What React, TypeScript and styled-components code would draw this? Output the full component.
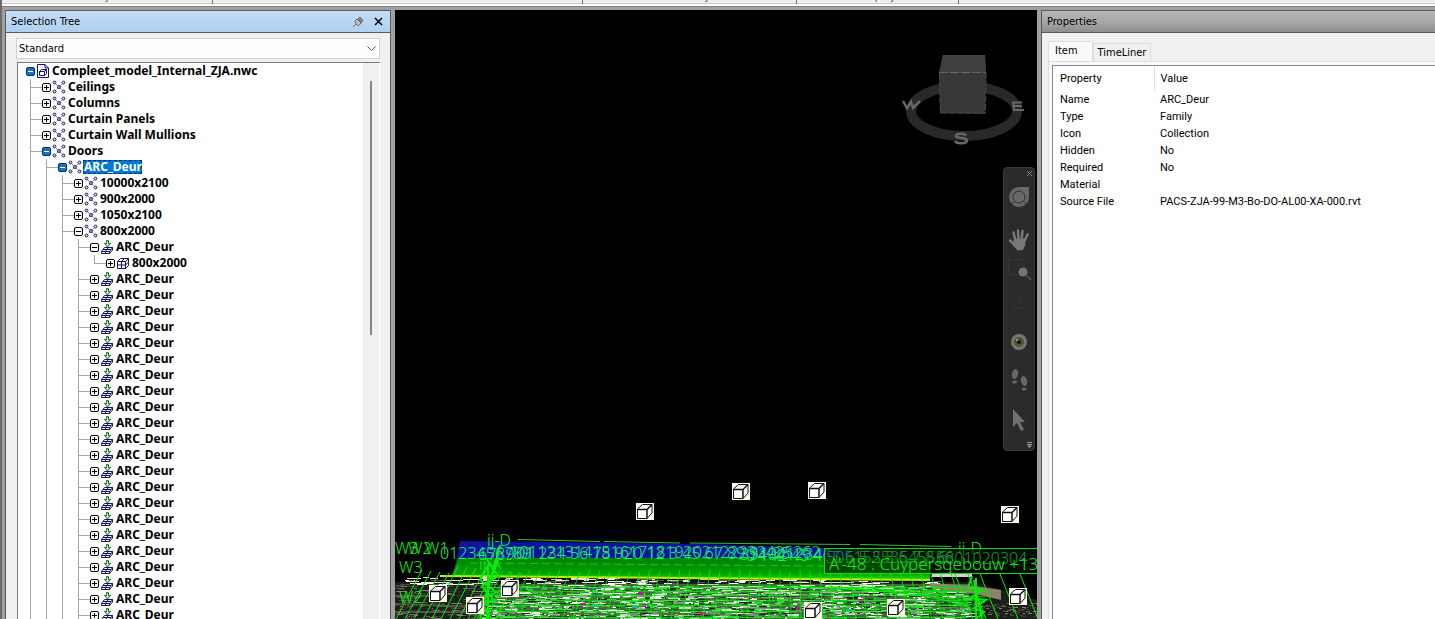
import React from "react";
import styled, { createGlobalStyle } from "styled-components";

const GlobalStyle = createGlobalStyle`
  *, *::before, *::after { box-sizing: border-box; }
  body {
    margin: 0;
    background: #a0a0a0;
    color: #000;
    font: 11px/16px "DejaVu Sans Condensed", Tahoma, sans-serif;
  }
  button, select { font: inherit; color: inherit; }
`;

/* ---------- window frame ---------- */

const Window = styled.div`
  display: flex;
  flex-direction: column;
  height: 100vh;
  overflow: hidden;
  border-left: 2px solid #6a6a6a;
`;

const Ribbon = styled.header`
  display: flex;
  flex: none;
  height: 6px;
  margin-bottom: 4px;
  background: #f0f0f0;
  border-bottom: 2px solid #fff;
  box-shadow: inset 0 -1px #c8c8c8, 0 1px #858585;
`;

const RibbonGroup = styled.div<{ $width?: number }>`
  display: flex;
  flex: ${(p) => (p.$width ? `0 0 ${p.$width}px` : "1")};
  align-items: flex-end;
  justify-content: center;
  overflow: hidden;
  line-height: 14px;
  color: #444;
  border-right: ${(p) => (p.$width ? "1px solid #777" : "none")};
`;

const Workspace = styled.div`
  display: grid;
  grid-template-columns: 386px minmax(0, 1fr) 394px;
  gap: 4px;
  flex: 1;
  min-height: 0;
  padding-left: 3px;
`;

/* ---------- dock panels ---------- */

const Panel = styled.section<{ $open?: boolean }>`
  display: flex;
  flex-direction: column;
  min-height: 0;
  background: #f0f0f0;
  border: 1px solid #5c5c5c;
  border-width: 1px ${(p) => (p.$open ? 0 : 1)}px 0 1px;
`;

const PanelHeader = styled.div<{ $active?: boolean }>`
  display: flex;
  flex: none;
  align-items: center;
  height: 22px;
  padding: 0 6px 0 5px;
  background: ${(p) =>
    p.$active
      ? "linear-gradient(#c3dcf5, #b0d0f0)"
      : "linear-gradient(#b6b6b6, #a8a8a8 50%, #8e8e8e)"};
  border-bottom: 1px solid #5c5c5c;
`;

const PanelTitle = styled.h2`
  flex: 1;
  margin: 0;
  padding-top: 1px;
  font-size: 11px;
  font-weight: 400;
`;

const HeaderButton = styled.button`
  display: flex;
  align-items: center;
  justify-content: center;
  width: 12px;
  height: 16px;
  margin-left: 8px;
  padding: 0;
  background: none;
  border: 0;
`;

const SelectionBody = styled.div`
  display: flex;
  flex-direction: column;
  flex: 1;
  min-height: 0;
  padding: 5px 10px 0 10px;
`;

const Combo = styled.label`
  display: grid;
  flex: none;
  align-items: center;
  height: 21px;
  margin-bottom: 3px;
  background: #fdfdfd;
  border: 1px solid #d2d2d2;

  > * { grid-area: 1 / 1; }
  > svg { justify-self: end; margin-right: 3px; pointer-events: none; }
`;

const ComboSelect = styled.select`
  width: 100%;
  height: 19px;
  padding: 0 2px;
  appearance: none;
  background: none;
  border: 0;
`;

/* ---------- tree ---------- */

const TreeFrame = styled.div`
  display: flex;
  flex: 1;
  min-height: 0;
  margin-left: 1px;
  overflow: hidden;
  background: #fff;
  border: solid #7c7c7c;
  border-width: 1px 0 0 1px;
`;

const TreeList = styled.ul`
  flex: 1;
  margin: 0;
  padding: 0 0 0 4px;
  list-style: none;
  font: 700 12px/16px "Noto Sans", Tahoma, sans-serif;
`;

const TreeRow = styled.li`
  display: flex;
  align-items: center;
  height: 16px;
`;

const Guide = styled.span<{ $branch?: boolean; $end?: boolean }>`
  flex: none;
  width: ${(p) => (p.$branch ? 20 : 16)}px;
  height: 16px;
  background-image: linear-gradient(#a8a8a8, #a8a8a8), linear-gradient(#a8a8a8, #a8a8a8);
  background-repeat: no-repeat;
  background-position: 8px 0, 8px 8px;
  background-size: 1px ${(p) => (p.$end ? 8 : 16)}px, ${(p) => (p.$branch ? 12 : 0)}px 1px;
`;

const Toggle = styled.button<{ $selected?: boolean; $root?: boolean }>`
  display: flex;
  flex: none;
  width: 9px;
  height: 9px;
  margin: 0 1px 0 ${(p) => (p.$root ? 4 : 0)}px;
  padding: 0;
  color: ${(p) => (p.$selected ? "#fff" : "#000")};
  background: ${(p) => (p.$selected ? "#1474c4" : "#fff")};
  border: 1px solid ${(p) => (p.$selected ? "#0a2c66" : "#000")};
  border-radius: 2px;
`;

const NodeLabel = styled.span<{ $selected?: boolean }>`
  margin-left: 1px;
  padding: 0 0 0 1px;
  line-height: 14px;
  white-space: nowrap;
  color: ${(p) => (p.$selected ? "#fff" : "#000")};
  background: ${(p) => (p.$selected ? "#0078d7" : "none")};
  outline: ${(p) => (p.$selected ? "1px dashed #06305c" : "none")};
  outline-offset: -1px;
`;

const ScrollTrack = styled.div`
  flex: none;
  width: 17px;
  padding: 18px 0 0 7px;
  background: #f0f0f0;
  border-right: 1px solid #fff;
`;

const ScrollThumb = styled.div`
  width: 2px;
  height: 254px;
  background: #858585;
`;

type Kind = "file" | "collection" | "insert" | "geometry";
type Node = {
  label: string;
  level: number;
  kind: Kind;
  open?: boolean;
  marked?: boolean;
  selected?: boolean;
  last?: boolean;
};

const nodes: Node[] = [
  { label: "Compleet_model_Internal_ZJA.nwc", level: 0, kind: "file", open: true, marked: true },
  { label: "Ceilings", level: 1, kind: "collection" },
  { label: "Columns", level: 1, kind: "collection" },
  { label: "Curtain Panels", level: 1, kind: "collection" },
  { label: "Curtain Wall Mullions", level: 1, kind: "collection" },
  { label: "Doors", level: 1, kind: "collection", open: true, marked: true },
  { label: "ARC_Deur", level: 2, kind: "collection", open: true, marked: true, selected: true },
  { label: "10000x2100", level: 3, kind: "collection" },
  { label: "900x2000", level: 3, kind: "collection" },
  { label: "1050x2100", level: 3, kind: "collection" },
  { label: "800x2000", level: 3, kind: "collection", open: true },
  { label: "ARC_Deur", level: 4, kind: "insert", open: true },
  { label: "800x2000", level: 5, kind: "geometry", last: true },
  ...Array.from({ length: 22 }, (): Node => ({ label: "ARC_Deur", level: 4, kind: "insert" })),
];

function NodeIcon({ kind }: { kind: Kind }) {
  const ink = "#12126e";
  if (kind === "file")
    return (
      <svg width="14" height="16" viewBox="0 0 14 16" fill="#fff" stroke={ink}>
        <path d="M1.500 1.500H9L12.500 5V14.500H1.500Z" />
        <path d="M9 1.500V5H12.500" fill="none" />
        <path d="M3.500 8.500H8.500V12.500H3.500ZM3.500 8.500L5.500 6.500H10.500L8.500 8.500M10.500 6.500V10.500L8.500 12.500" />
      </svg>
    );
  if (kind === "collection")
    return (
      <svg width="14" height="14" viewBox="0 0 14 14" fill="#e4e4fa" stroke={ink}>
        <path d="M4 4L10 10M10 4L4 10" strokeDasharray="1 1" strokeWidth="0.800" />
        <circle cx="2.500" cy="2.500" r="1.400" />
        <circle cx="11.500" cy="2.500" r="1.400" />
        <circle cx="7" cy="7" r="1.400" />
        <circle cx="2.500" cy="11.500" r="1.400" />
        <circle cx="11.500" cy="11.500" r="1.400" />
      </svg>
    );
  if (kind === "insert")
    return (
      <svg width="14" height="14" viewBox="0 0 14 14" fill="#fff" stroke={ink}>
        <path d="M1.500 11.500L4.500 7.500H12.500L9.500 11.500ZM1.500 11.500V13.500H9.500V11.500M9.500 13.500L12.500 10V7.500" />
        <path d="M3 9.500H11M8.500 7.500L5.500 11.500V13.500" fill="none" />
        <path d="M6.500 0.500H8.500V3.500H10.500L7.500 7L4.500 3.500H6.500Z" fill="#b9e4b9" stroke="#1c7a2c" />
      </svg>
    );
  return (
    <svg width="14" height="14" viewBox="0 0 14 14" fill="#fff" stroke={ink}>
      <path d="M1.500 5.500L4.500 2.500H12.500V9.500L9.500 12.500H1.500Z" />
      <path d="M1.500 5.500H9.500V12.500M9.500 5.500L12.500 2.500M5.500 12.500V5.500L8.500 2.500M1.500 9H9.500L12.500 6" />
    </svg>
  );
}

function TreeItem({ node }: { node: Node }) {
  return (
    <TreeRow>
      {Array.from({ length: node.level }, (_, i) => (
        <Guide key={i} $branch={i === node.level - 1} $end={node.last && i === node.level - 1} />
      ))}
      <Toggle $selected={node.marked} $root={node.level === 0} aria-label={node.open ? "Collapse" : "Expand"}>
        <svg width="7" height="7" viewBox="0 0 7 7" stroke="currentColor">
          <path d={node.open ? "M1 3.500H6" : "M1 3.500H6M3.500 1V6"} />
        </svg>
      </Toggle>
      <NodeIcon kind={node.kind} />
      <NodeLabel $selected={node.selected}>{node.label}</NodeLabel>
    </TreeRow>
  );
}

/* ---------- 3D viewport ---------- */

const Viewport = styled.main`
  position: relative;
  overflow: hidden;
  background: #000;
`;

const SceneCanvas = styled.svg`
  display: block;
  width: 100%;
  height: 100%;
  font-family: "Noto Sans", sans-serif;
  font-weight: 300;
`;

const ViewCube = styled.svg`
  position: absolute;
  top: 40px;
  right: 12px;
`;

const NavBar = styled.nav`
  position: absolute;
  top: 157px;
  right: 2px;
  display: flex;
  flex-direction: column;
  align-items: center;
  width: 32px;
  height: 284px;
  background: #2b2b2b;
  border: 1px solid #3b3b3b;
  border-radius: 4px;
`;

const NavButton = styled.button<{ $height: number }>`
  display: flex;
  flex: none;
  align-items: center;
  justify-content: center;
  width: 30px;
  height: ${(p) => p.$height}px;
  padding: 0;
  background: none;
  border: 0;
`;

const NavSmall = styled(NavButton)`
  align-self: flex-end;
  width: 10px;
`;

function makeRandom(seed: number) {
  let s = seed;
  return () => {
    s = (s * 1103515245 + 12345) % 2147483648;
    return s / 2147483648;
  };
}

type Speck = { x: number; y: number; w: number; h: number; c: string };

function buildRubble() {
  const rnd = makeRandom(11);
  const pick = (list: string[]) => list[Math.floor(rnd() * list.length)];
  const city = ["#e8f4e4", "#c4dcc0", "#9fb79c", "#3f6a3c", "#202820", "#5f9a58", "#d8d8d8", "#18b018", "#1c4a1c", "#7f8f80", "#34d834", "#2c8c2c", "#f4fff0"];
  const road = ["#4a4642", "#2a2826", "#6a6460", "#3a3430", "#1a1a1a", "#5a4038", "#807c78"];
  const out: Speck[] = [];
  for (let i = 0; i < 2200; i++) {
    const y = 586 + Math.floor(rnd() * 33);
    const left = 500 - Math.floor((y - 586) * 0.8);
    const x = left + Math.floor(rnd() * (968 - left));
    out.push({ x, y, w: 2 + Math.floor(rnd() * 12), h: rnd() > 0.8 ? 2 : 1, c: pick(city) });
  }
  for (let i = 0; i < 260; i++) {
    const x = 395 + Math.floor(rnd() * 95);
    out.push({ x, y: 584 + Math.floor(rnd() * 35), w: 2 + Math.floor(rnd() * 10), h: 1, c: pick(road) });
  }
  for (let i = 0; i < 150; i++) {
    const x = 980 + Math.floor(rnd() * 57);
    out.push({ x, y: 603 + Math.floor(rnd() * 14), w: 1 + Math.floor(rnd() * 4), h: 1, c: pick(road) });
  }
  for (let i = 0; i < 190; i++) {
    const x = 395 + Math.floor(rnd() * 540);
    const y = 577 + Math.floor((x - 395) / 110) + Math.floor(rnd() * 8);
    out.push({ x, y, w: 5 + Math.floor(rnd() * 12), h: 1, c: pick(["#fff", "#f4f4ec", "#fff", "#c8c8c0", "#5a5a50", "#e0ecd8"]) });
  }
  return out;
}

const rubble = buildRubble();

const patches = [
  [638, 592, "#c010a0"], [580, 603, "#c010a0"], [640, 604, "#b0109a"], [632, 605, "#20b890"],
  [592, 604, "#20b890"], [796, 607, "#c010a0"], [846, 609, "#20b8a0"], [858, 599, "#b01090"],
  [592, 590, "#30c8a8"], [700, 612, "#c010a0"],
] as const;

const markers = [
  [636, 503], [732, 483], [808, 482], [1001, 506], [429, 585], [501, 580], [466, 597],
  [804, 602], [887, 599], [1009, 588],
];

function Marker({ x, y }: { x: number; y: number }) {
  return (
    <g transform={`translate(${x} ${y})`}>
      <rect width="18" height="17" fill="#fbfbe6" />
      <path d="M1.500 6L6.500 1.500H16V10L11 15.500H1.500Z" fill="#fff" stroke="#111" />
      <path d="M1.500 6.500H11V15.500M11 6.500L16 1.500" fill="none" stroke="#111" strokeWidth="1.500" />
    </g>
  );
}

function Scene() {
  const steep = Array.from({ length: 12 }, (_, i) => 404 + i * 9);
  const columns = Array.from({ length: 46 }, (_, i) => 500 + i * 10);
  return (
    <SceneCanvas viewBox="395 10 642 609" preserveAspectRatio="xMidYMax slice" aria-label="Model view">
      <defs>
        <linearGradient id="lawn" x1="0" y1="0" x2="0" y2="1">
          <stop offset="0" stopColor="#008400" />
          <stop offset="0.700" stopColor="#00a000" />
          <stop offset="1" stopColor="#20e010" />
        </linearGradient>
      </defs>
      <path d="M460 541L700 544L850 549V562H456Z" fill="#0c14a0" />
      <path d="M850 549L930 552V562H850Z" fill="#04240c" />
      <path d="M395 582H975L1037 600V619H395Z" fill="#1b1f1a" />
      <path d="M500 584H968L972 619H474Z" fill="#3c6a38" />
      <g shapeRendering="crispEdges">
        {rubble.map((r, i) => (
          <rect key={i} x={r.x} y={r.y} width={r.w} height={r.h} fill={r.c} />
        ))}
        {patches.map(([x, y, c]) => (
          <rect key={`${x}-${y}`} x={x} y={y} width="6" height="3" fill={c} />
        ))}
      </g>
      <path d="M458 558H930V580H850L452 576Z" fill="url(#lawn)" />
      <path d="M440 575L930 579V581L440 577Z" fill="#b8f010" />
      <path d="M932 574H972V577H932Z" fill="#d0d4cc" />
      <path d="M930 583L975 586L1001 590V600L975 594L930 588Z" fill="#8c8468" />
      <path d="M395 596H440M395 604L480 607M395 612H470" stroke="#55504c" strokeWidth="2" />

      <g stroke="#00f000" fill="none">
        {steep.map((x) => (
          <path key={x} d={`M${x + 18} ${566 + (x % 8)}L${x - 8} 619`} />
        ))}
        {columns.map((x, i) => (
          <path key={x} d={`M${x} ${570 + (i % 3)}L${x + Math.round((x - 740) * 0.09) - 4} 619`} opacity="0.850" />
        ))}
        {[587, 591, 595, 600, 605, 611, 617].map((y) => (
          <path key={y} d={`M480 ${y}.500H968`} opacity="0.750" />
        ))}
        {[0, 1, 2, 3, 4, 5].map((i) => (
          <path key={i} d={`M${760 + i * 34} 586L985 ${592 + i * 5}`} opacity="0.800" />
        ))}
        {[955, 968, 980, 1000, 1020].map((x) => (
          <path key={x} d={`M${x} 574L${x + 18} 619`} />
        ))}
        <path d="M518 539.500L600 541.500M604 541.500L680 543M690 543L850 544.500M860 544.500L951 546.500" stroke="#30c030" />
        <path d="M470 563L930 567" stroke="#20c020" strokeDasharray="8 4" />
        <path d="M500 545L480 619M498 560L484 600M486 558L498 576L482 586L494 600L480 606L492 619M490 562L480 580L496 592L478 602L490 612M488 566V619" strokeWidth="2" />
        <path d="M972 576L968 588L982 590L970 598L986 600L974 608L984 612L976 619M976 578V619M974 580L982 619" strokeWidth="2" />
      </g>

      <g fill="#14f014" fontSize="16">
        <text x="395" y="554">W3</text>
        <text x="408" y="554">W2</text>
        <text x="425" y="554">W1</text>
        <text x="399" y="573">W3</text>
        <text x="399" y="603">W2</text>
        <text x="487" y="546">ij-D</text>
        <text x="479" y="570">ij-A</text>
        <text x="958" y="554">ij-D</text>
      </g>
      <g fill="#18f060" fontSize="16">
        <text x="440" y="559">0123456789</text>
        <text x="478" y="560">6789</text>
        <text x="510" y="558">1011213141516171819202122232425262</text>
        <text x="516" y="559">01 234 56 78 920 12 3 45 67 89 31 35</text>
        <text x="740" y="560">394041234</text>
        <text x="746" y="561">0 142 45 46</text>
      </g>
      <rect x="824.500" y="548.500" width="220" height="25" fill="#001400" fillOpacity="0.620" stroke="#10e010" />
      <g fill="#18982c" fontSize="16">
        <text x="826" y="563">50515253545556</text>
        <text x="832" y="563">5 6 5 5 8 6 7 8 6</text>
        <text x="936" y="564">6801020304</text>
      </g>
      <text x="829" y="570" fontSize="17" fill="#14f014">A'-48 : Cuypersgebouw +135</text>
      {markers.map(([x, y]) => (
        <Marker key={`${x}-${y}`} x={x} y={y} />
      ))}
    </SceneCanvas>
  );
}

function Cube() {
  return (
    <ViewCube width="124" height="98" viewBox="901 50 124 98" aria-label="View cube">
      <ellipse cx="964" cy="111" rx="53" ry="25" fill="none" stroke="#292929" strokeWidth="10" />
      <path d="M943 55H985L986 73L985 114L940 113L939 73Z" fill="#383838" />
      <path d="M943 55H985L986 73H939Z" fill="#404040" />
      <path d="M939 72.500H986" stroke="#686868" strokeDasharray="9 2" />
      <path d="M943 55.500H985M939.500 73L940.500 113H985.500L986 73" fill="none" stroke="#484848" strokeDasharray="6 2" />
      <g fill="none" stroke="#686868" strokeWidth="2.500">
        <path d="M903 101L907 108L911 102L913 108L920 101" />
        <path d="M1022 102.500H1013L1014 110H1024M1013 106H1022" strokeWidth="2" />
        <path d="M966 135.500C965 133 956 133 956 136C956 139 967 137 967 140.500C967 144 956 144 955 141" />
      </g>
    </ViewCube>
  );
}

function Navigation() {
  return (
    <NavBar aria-label="Navigation">
      <NavSmall $height={10} aria-label="Close navigation bar">
        <svg width="5" height="5" viewBox="0 0 5 5" stroke="#8a8a8a"><path d="M0 0L5 5M5 0L0 5" /></svg>
      </NavSmall>
      <NavButton $height={38} aria-label="Steering wheel">
        <svg width="22" height="22" viewBox="0 0 22 22">
          <path d="M11 1H21V11A10 10 0 1 1 11 1Z" fill="#686868" />
          <g fill="none" stroke="#303030"><circle cx="11" cy="11" r="6" /><path d="M6.500 15.500L4 18M15.500 15.500L18 18" /></g>
        </svg>
      </NavButton>
      <NavButton $height={40} aria-label="Pan">
        <svg width="22" height="32" viewBox="0 -8 22 32" fill="none" stroke="#787878" strokeLinecap="round" strokeWidth="2.500">
          <path d="M7.500 13L5.500 4.500M10.500 12L10 2.500M13.500 12L14.500 3M16 14L19.500 6.500M8 18L2 12.500" />
          <path d="M7 12H16V17L14 21H10L6 17Z" fill="#787878" />
        </svg>
      </NavButton>
      <NavButton $height={26} aria-label="Zoom window">
        <svg width="26" height="26" viewBox="0 0 26 26" fill="none">
          <path d="M2.500 3.500H18V19H2.500Z" stroke="#363636" />
          <circle cx="17" cy="16" r="4.500" fill="#747474" /><path d="M20 19L25 24" stroke="#484848" strokeWidth="2" />
        </svg>
      </NavButton>
      <NavButton $height={42} aria-label="Orbit">
        <svg width="20" height="20" viewBox="0 0 20 20" fill="none" stroke="#3a3a3a"><path d="M9 5L13 8L10 10M7 15H13M5 12L7 15" /></svg>
      </NavButton>
      <NavButton $height={36} aria-label="Look">
        <svg width="20" height="20" viewBox="0 0 20 20">
          <circle cx="10" cy="10" r="8" fill="#77776f" /><circle cx="10" cy="10" r="5" fill="#4e5236" /><circle cx="10" cy="10" r="2" fill="#151510" /><circle cx="8" cy="8" r="1" fill="#aaa" />
        </svg>
      </NavButton>
      <NavButton $height={40} aria-label="Walk">
        <svg width="20" height="24" viewBox="0 0 20 24" fill="#686868">
          <ellipse cx="6" cy="6" rx="3" ry="5" transform="rotate(14 6 6)" /><ellipse cx="5.500" cy="14" rx="2.500" ry="1.500" />
          <ellipse cx="15" cy="13" rx="3" ry="5" transform="rotate(-14 15 13)" /><ellipse cx="15" cy="21" rx="2.500" ry="1.500" />
        </svg>
      </NavButton>
      <NavButton $height={40} aria-label="Select">
        <svg width="16" height="24" viewBox="0 0 16 24" fill="#707070"><path d="M2 1V19L6 15L10 23L13 21.500L9 14H14Z" /></svg>
      </NavButton>
      <NavSmall $height={10} aria-label="Customize">
        <svg width="5" height="6" viewBox="0 0 5 6"><path d="M0 .5H5M0 2.500H5" stroke="#999" /><path d="M0 3.500H5L2.500 6Z" fill="#999" /></svg>
      </NavSmall>
    </NavBar>
  );
}

/* ---------- properties ---------- */

const PropertiesBody = styled.div`
  display: flex;
  flex-direction: column;
  flex: 1;
  min-height: 0;
  padding: 8px 0 0 6px;
`;

const Tabs = styled.div`
  display: flex;
  flex: none;
  align-items: flex-end;
`;

const Tab = styled.button<{ $current?: boolean }>`
  height: ${(p) => (p.$current ? 20 : 18)}px;
  padding: ${(p) => (p.$current ? "0 14px 2px 6px" : "0 4px")};
  line-height: 16px;
  background: ${(p) => (p.$current ? "#f9f9f9" : "#f0f0f0")};
  border: 1px solid #dedede;
  border-bottom: 0;
`;

const TabPane = styled.div`
  display: flex;
  flex: 1;
  min-height: 0;
  padding: 3px 0 0 3px;
  background: #f9f9f9;
  border: solid #dedede;
  border-width: 1px 0 0 1px;
`;

const Sheet = styled.div`
  flex: 1;
  background: #fff;
  border: solid #828790;
  border-width: 1px 0 0 1px;
`;

const PropertyTable = styled.table`
  width: 100%;
  table-layout: fixed;
  border-collapse: collapse;
  font-family: Roboto, Arial, sans-serif;
  line-height: 17px;
  text-align: left;

  th, td { padding: 0 7px; font-weight: 400; white-space: nowrap; }
  th:first-child { width: 101px; }
  td + td, th + th { padding-left: 6px; }
  thead th { height: 25px; }
  thead th:first-child { border-right: 1px solid #e0e0e0; }
`;

const properties = [
  ["Name", "ARC_Deur"],
  ["Type", "Family"],
  ["Icon", "Collection"],
  ["Hidden", "No"],
  ["Required", "No"],
  ["Material", ""],
  ["Source File", "PACS-ZJA-99-M3-Bo-DO-AL00-XA-000.rvt"],
];

export default function App() {
  return (
    <>
      <GlobalStyle />
      <Window>
        <Ribbon>
          <RibbonGroup $width={211}>Project</RibbonGroup>
          <RibbonGroup $width={370} />
          <RibbonGroup $width={214}>Visibility</RibbonGroup>
          <RibbonGroup $width={162}>Display</RibbonGroup>
          <RibbonGroup />
        </Ribbon>
        <Workspace>
          <Panel>
            <PanelHeader $active>
              <PanelTitle>Selection Tree</PanelTitle>
              <HeaderButton aria-label="Auto hide">
                <svg width="12" height="12" viewBox="0 0 12 12" fill="#c4c4c4" stroke="#666">
                  <path d="M1 11L4 8" /><path d="M3 5L5 3L9 7L7 9.500C5 9.500 3 7.500 3 5Z" /><path d="M6 3L8 1L11 4.500L9 7Z" fill="#888" />
                </svg>
              </HeaderButton>
              <HeaderButton aria-label="Close">
                <svg width="9" height="9" viewBox="0 0 9 9" stroke="#000" strokeWidth="1.500"><path d="M1 1L8 8M8 1L1 8" /></svg>
              </HeaderButton>
            </PanelHeader>
            <SelectionBody>
              <Combo>
                <ComboSelect aria-label="Tree view" defaultValue="Standard">
                  <option>Standard</option>
                </ComboSelect>
                <svg width="9" height="6" viewBox="0 0 9 6" fill="none" stroke="#555"><path d="M.5 .5L4.500 4.500L8.500 .5" /></svg>
              </Combo>
              <TreeFrame>
                <TreeList>
                  {nodes.map((node, i) => (
                    <TreeItem key={i} node={node} />
                  ))}
                </TreeList>
                <ScrollTrack>
                  <ScrollThumb />
                </ScrollTrack>
              </TreeFrame>
            </SelectionBody>
          </Panel>
          <Viewport>
            <Scene />
            <Cube />
            <Navigation />
          </Viewport>
          <Panel $open>
            <PanelHeader>
              <PanelTitle>Properties</PanelTitle>
            </PanelHeader>
            <PropertiesBody>
              <Tabs role="tablist">
                <Tab role="tab" aria-selected="true" $current>Item</Tab>
                <Tab role="tab" aria-selected="false">TimeLiner</Tab>
              </Tabs>
              <TabPane>
                <Sheet>
                  <PropertyTable>
                    <thead>
                      <tr><th scope="col">Property</th><th scope="col">Value</th></tr>
                    </thead>
                    <tbody>
                      {properties.map(([name, value]) => (
                        <tr key={name}><td>{name}</td><td>{value}</td></tr>
                      ))}
                    </tbody>
                  </PropertyTable>
                </Sheet>
              </TabPane>
            </PropertiesBody>
          </Panel>
        </Workspace>
      </Window>
    </>
  );
}
